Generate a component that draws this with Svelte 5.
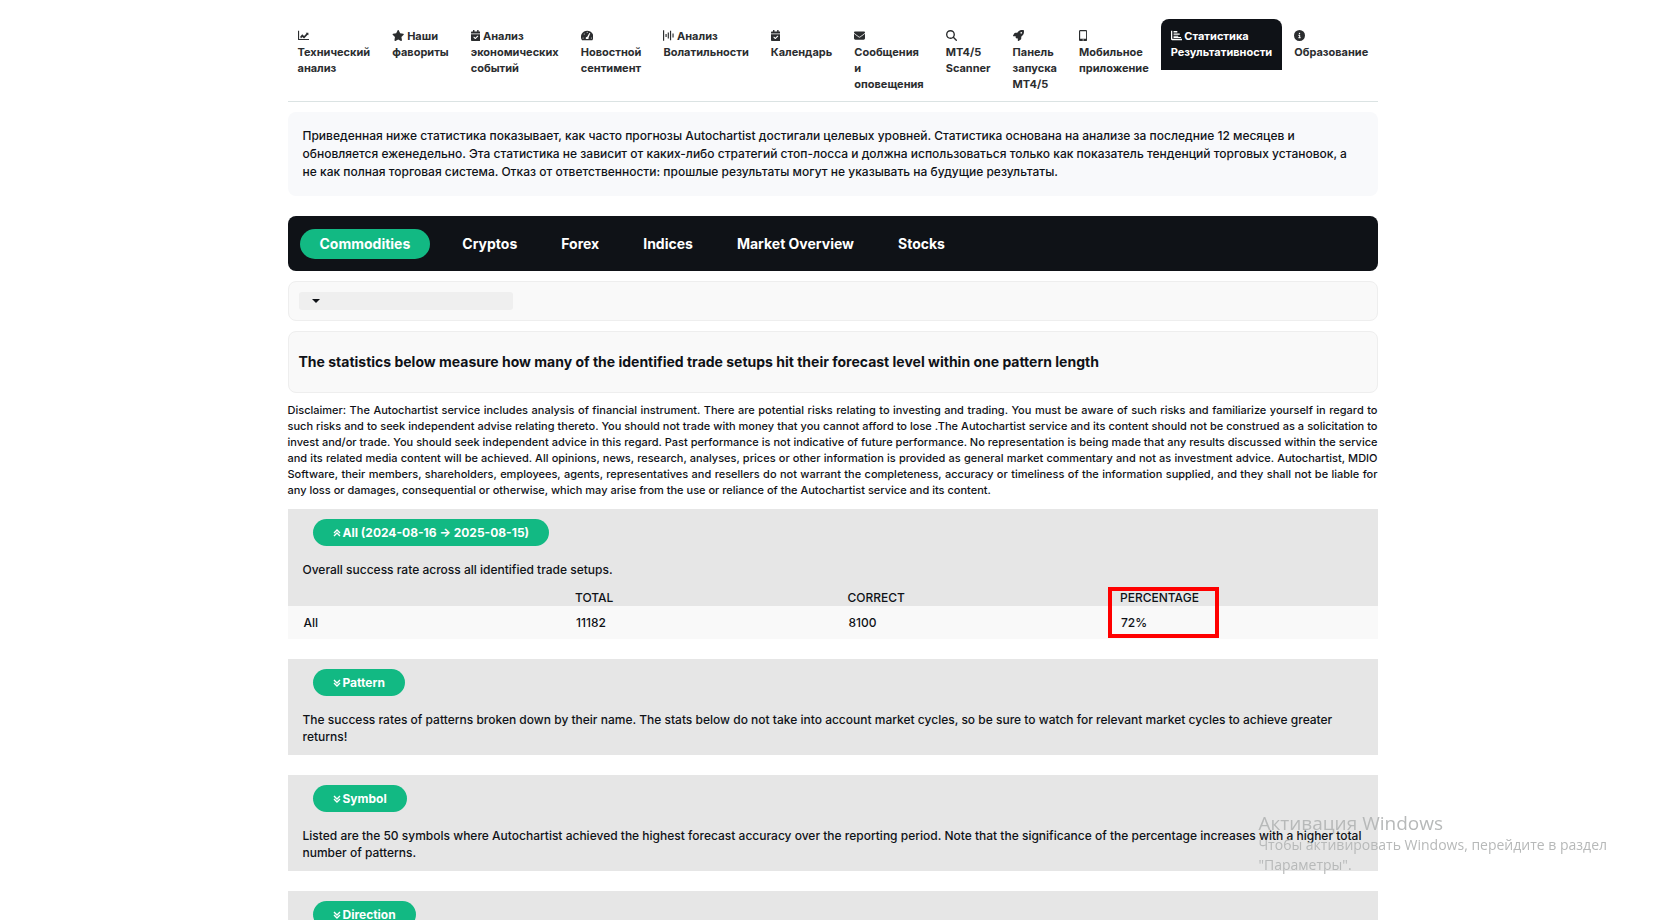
<script lang="ts">
  type Tab = {
    icon: string;
    lines: string[];
    inline?: boolean;
    active?: boolean;
  };

  type Section = {
    title: string;
    text?: string;
    open?: boolean;
  };

  const tabs: Tab[] = [
    { icon: 'line', lines: ['Технический', 'анализ'] },
    { icon: 'star', lines: ['Наши', 'фавориты'], inline: true },
    { icon: 'calendar', lines: ['Анализ', 'экономических', 'событий'], inline: true },
    { icon: 'gauge', lines: ['Новостной', 'сентимент'] },
    { icon: 'volatility', lines: ['Анализ', 'Волатильности'], inline: true },
    { icon: 'calendar', lines: ['Календарь'] },
    { icon: 'envelope', lines: ['Сообщения', 'и', 'оповещения'] },
    { icon: 'search', lines: ['MT4/5', 'Scanner'] },
    { icon: 'rocket', lines: ['Панель', 'запуска', 'MT4/5'] },
    { icon: 'mobile', lines: ['Мобильное', 'приложение'] },
    { icon: 'bars', lines: ['Статистика', 'Результативности'], inline: true, active: true },
    { icon: 'info', lines: ['Образование'] }
  ];

  const groups = ['Commodities', 'Cryptos', 'Forex', 'Indices', 'Market Overview', 'Stocks'];
  const columns = ['', 'TOTAL', 'CORRECT', 'PERCENTAGE'];
  const rows = [['All', '11182', '8100', '72%']];

  let activeGroup = $state('Commodities');
  let sections = $state<Section[]>([
    {
      title: 'All (2024-08-16 → 2025-08-15)',
      text: 'Overall success rate across all identified trade setups.',
      open: true
    },
    {
      title: 'Pattern',
      text: 'The success rates of patterns broken down by their name. The stats below do not take into account market cycles, so be sure to watch for relevant market cycles to achieve greater returns!'
    },
    {
      title: 'Symbol',
      text: 'Listed are the 50 symbols where Autochartist achieved the highest forecast accuracy over the reporting period. Note that the significance of the percentage increases with a higher total number of patterns.'
    },
    { title: 'Direction' }
  ]);

  // width of each icon's viewBox, height is always 512
  const iconWidths: Record<string, number> = {
    star: 576,
    calendar: 448,
    gauge: 576,
    mobile: 384
  };
</script>

{#snippet icon(name: string)}
  <svg class="icon" viewBox="0 0 {iconWidths[name] ?? 512} 512" aria-hidden="true">
    {#if name === 'line'}
      <path d="M0 32h52v384h460v52H28c-15 0-28-13-28-28Z" />
      <path d="m100 318 98-116 84 78 112-120-34-34h124v124l-34-34-168 184-84-80-60 74Z" />
    {:else if name === 'star'}
      <path
        d="M316.9 18C311.6 7 300.4 0 288.1 0s-23.4 7-28.8 18L195 150.3 51.4 171.5c-12 1.8-22 10.2-25.7 21.7s-.7 24.2 7.9 32.7L137.8 329 113.2 474.7c-2 12 3 24.2 12.9 31.3s23 8 33.8 2.3l128.3-68.5 128.3 68.5c10.8 5.7 23.9 4.9 33.8-2.3s14.9-19.3 12.9-31.3L438.5 329 542.7 225.9c8.6-8.5 11.7-21.2 7.9-32.7s-13.7-19.9-25.7-21.7L381.2 150.3 316.9 18z"
      />
    {:else if name === 'calendar'}
      <path d="M96 0h64v64h128V0h64v64h48c26 0 48 22 48 48v48H0v-48c0-26 22-48 48-48h48Z" />
      <path
        d="M0 192h448v272c0 26.5-21.5 48-48 48H48c-26.5 0-48-21.5-48-48V192zM329 305c9.4-9.4 9.4-24.6 0-33.9s-24.6-9.4-33.9 0l-95 95-47-47c-9.4-9.4-24.6-9.4-33.9 0s-9.4 24.6 0 33.9l64 64c9.4 9.4 24.6 9.4 33.9 0L329 305z"
      />
    {:else if name === 'gauge'}
      <path
        fill-rule="evenodd"
        d="M288 32a288 288 0 0 0-246 438c6 6 14 10 24 10h444c10 0 18-4 24-10A288 288 0 0 0 288 32ZM288 82a24 24 0 1 1 0 48 24 24 0 0 1 0-48ZM96 348a24 24 0 1 1 0 48 24 24 0 0 1 0-48ZM150 166a24 24 0 1 1 0 48 24 24 0 0 1 0-48ZM480 348a24 24 0 1 1 0 48 24 24 0 0 1 0-48ZM388 138l44 16-80 196c10 24 4 48-10 68H234c-34-44-6-106 56-108Z"
      />
    {:else if name === 'volatility'}
      <path
        d="M0 16h54v480H0ZM116 184h54v144h-54ZM220 120h54v272h-54ZM324 32h54v448h-54ZM440 160h54v192h-54Z"
      />
    {:else if name === 'envelope'}
      <path
        d="M48 64C21.5 64 0 85.5 0 112c0 15.1 7.1 29.3 19.2 38.4l217.6 163.2c11.4 8.5 27 8.5 38.4 0L492.8 150.4c12.1-9.1 19.2-23.3 19.2-38.4c0-26.5-21.5-48-48-48H48zM0 176v208c0 35.3 28.7 64 64 64h384c35.3 0 64-28.7 64-64V176L294.4 339.2c-22.8 17.1-54 17.1-76.8 0L0 176z"
      />
    {:else if name === 'search'}
      <path
        d="M416 208c0 45.9-14.9 88.3-40 122.7l126.6 126.7c12.5 12.5 12.5 32.8 0 45.3s-32.8 12.5-45.3 0L330.7 376c-34.4 25.2-76.8 40-122.7 40C93.1 416 0 322.9 0 208S93.1 0 208 0s208 93.1 208 208zM208 352a144 144 0 1 0 0-288 144 144 0 1 0 0 288z"
      />
    {:else if name === 'rocket'}
      <path
        d="M156.6 384.9L125.7 354c-8.5-8.5-11.5-20.8-7.7-32.2c3-8.9 7-20.5 11.8-33.8H24c-8.6 0-16.6-4.6-20.9-12.1s-4.2-16.7.2-24.1l52.5-88.5c13-21.9 36.5-35.3 61.9-35.3H200c2.4-4 4.8-7.7 7.2-11.3C289.1-4.1 411.1-8.1 483.9 5.3c11.6 2.1 20.6 11.2 22.8 22.8c13.4 72.9 9.3 194.8-111.4 276.7c-3.5 2.4-7.3 4.8-11.3 7.2v82.3c0 25.4-13.4 49-35.3 61.9l-88.5 52.5c-7.4 4.4-16.6 4.5-24.1.2s-12.1-12.2-12.1-20.9V380.8c-14.1 4.9-26.4 8.9-35.7 11.9c-11.2 3.6-23.4.5-31.8-7.8zM384 168a40 40 0 1 0 0-80 40 40 0 1 0 0 80z"
      />
    {:else if name === 'mobile'}
      <path
        fill-rule="evenodd"
        d="M64 0h256c35 0 64 29 64 64v384c0 35-29 64-64 64H64c-35 0-64-29-64-64V64C0 29 29 0 64 0ZM54 54v354h276V54ZM192 436a26 26 0 1 0 0 52 26 26 0 0 0 0-52Z"
      />
    {:else if name === 'bars'}
      <path d="M0 32h60v378h452v64H52c-28 0-52-22-52-50Z" />
      <path d="M118 50h176v64H118ZM118 160h288v60H118ZM118 264h220v50H118ZM118 330h350v40H118Z" />
    {:else if name === 'info'}
      <path
        d="M256 512A256 256 0 1 0 256 0a256 256 0 1 0 0 512zM216 336h24v-64h-24c-13.3 0-24-10.7-24-24s10.7-24 24-24h48c13.3 0 24 10.7 24 24v88h8c13.3 0 24 10.7 24 24s-10.7 24-24 24h-80c-13.3 0-24-10.7-24-24s10.7-24 24-24zm40-208a32 32 0 1 1 0 64 32 32 0 1 1 0-64z"
      />
    {/if}
  </svg>
{/snippet}

<main class="page">
  <nav class="tabs">
    {#each tabs as tab}
      <a href="#{tab.icon}" class:active={tab.active}>
        {@render icon(tab.icon)}
        {#if !tab.inline}<br />{/if}
        {#each tab.lines as line, i}
          {#if i > 0}<br />{/if}{line}
        {/each}
      </a>
    {/each}
  </nav>

  <p class="intro">
    Приведенная ниже статистика показывает, как часто прогнозы Autochartist достигали целевых уровней.
    Статистика основана на анализе за последние 12 месяцев и обновляется еженедельно. Эта статистика
    не зависит от каких-либо стратегий стоп-лосса и должна использоваться только как показатель
    тенденций торговых установок, а не как полная торговая система. Отказ от ответственности: прошлые
    результаты могут не указывать на будущие результаты.
  </p>

  <div class="groups">
    {#each groups as group}
      <button
        type="button"
        class:active={group === activeGroup}
        aria-pressed={group === activeGroup}
        onclick={() => (activeGroup = group)}
      >
        {group}
      </button>
    {/each}
  </div>

  <div class="panel">
    <label class="picker">
      <select></select>
    </label>
  </div>

  <div class="panel heading">
    <h1>
      The statistics below measure how many of the identified trade setups hit their forecast level
      within one pattern length
    </h1>
  </div>

  <p class="disclaimer">
    Disclaimer: The Autochartist service includes analysis of financial instrument. There are
    potential risks relating to investing and trading. You must be aware of such risks and familiarize
    yourself in regard to such risks and to seek independent advise relating thereto. You should not
    trade with money that you cannot afford to lose .The Autochartist service and its content should
    not be construed as a solicitation to invest and/or trade. You should seek independent advice in
    this regard. Past performance is not indicative of future performance. No representation is being
    made that any results discussed within the service and its related media content will be achieved.
    All opinions, news, research, analyses, prices or other information is provided as general market
    commentary and not as investment advice. Autochartist, MDIO Software, their members,
    shareholders, employees, agents, representatives and resellers do not warrant the completeness,
    accuracy or timeliness of the information supplied, and they shall not be liable for any loss or
    damages, consequential or otherwise, which may arise from the use or reliance of the Autochartist
    service and its content.
  </p>

  {#each sections as section}
    <section>
      <div class="summary">
        <button
          type="button"
          class="toggle"
          aria-expanded={section.open ?? false}
          onclick={() => (section.open = !section.open)}
        >
          <svg class="chevron" class:flipped={section.open} viewBox="0 0 8 8" aria-hidden="true">
            <path d="m1 1 3 3 3-3M1 4l3 3 3-3" />
          </svg>
          {section.title}
        </button>
        {#if section.text}
          <p>{section.text}</p>
        {/if}
      </div>
      {#if section.open}
        <table>
          <thead>
            <tr>
              {#each columns as column}
                <th>
                  {column}
                  {#if column === 'PERCENTAGE'}<span class="marker"></span>{/if}
                </th>
              {/each}
            </tr>
          </thead>
          <tbody>
            {#each rows as row}
              <tr>
                {#each row as cell}
                  <td>{cell}</td>
                {/each}
              </tr>
            {/each}
          </tbody>
        </table>
      {/if}
    </section>
  {/each}
</main>

<aside class="activation">
  <strong>Активация Windows</strong>
  <span>Чтобы активировать Windows, перейдите в раздел<br />"Параметры".</span>
</aside>

<style>
  :global(body) {
    margin: 0;
    background: #fff;
    color: #0f1217;
    font: 500 12px/17px Inter, 'Liberation Sans', sans-serif;
  }

  p,
  h1 {
    margin: 0;
  }

  button {
    border: 0;
    color: #fff;
    font-family: inherit;
    cursor: pointer;
  }

  .page {
    max-width: 1090px;
    margin: 0 auto;
    padding: 19px 0 0 4px;
  }

  .tabs {
    display: flex;
    align-items: flex-start;
    gap: 2px;
    border-bottom: 1px solid #dbe3e3;
  }

  .tabs a {
    padding: 9px 10px;
    border-radius: 8px 8px 0 0;
    color: #2b2d2f;
    font-size: 11px;
    font-weight: 700;
    line-height: 16px;
    text-decoration: none;
    white-space: nowrap;
  }

  .tabs a.active {
    padding-bottom: 10px;
    background: #0f1217;
    color: #fff;
  }

  .icon {
    height: 11px;
    fill: currentColor;
    vertical-align: -1px;
  }

  .intro {
    margin-top: 10px;
    padding: 15px;
    border-radius: 8px;
    background: #f8f9fb;
    line-height: 18px;
  }

  .groups {
    display: flex;
    gap: 4px;
    margin-top: 20px;
    padding: 13px 12px 12px;
    border-radius: 8px;
    background: #0f1217;
  }

  .groups button {
    padding: 6px 20px;
    border-radius: 15px;
    background: none;
    font-size: 14px;
    font-weight: 700;
    line-height: 18px;
  }

  .groups .active {
    margin-right: 8px;
    background: #12b983;
  }

  .panel {
    margin-top: 10px;
    padding: 10px;
    border: 1px solid #eee;
    border-radius: 8px;
    background: #f9f9f9;
  }

  .picker {
    position: relative;
    display: block;
    width: 214px;
  }

  .picker::after {
    content: '';
    position: absolute;
    top: 7px;
    left: 13px;
    border: 4px solid transparent;
    border-top-color: #0f1217;
    border-bottom: 0;
    pointer-events: none;
  }

  .picker select {
    display: block;
    width: 100%;
    height: 18px;
    border: 0;
    border-radius: 3px;
    background: #efefef;
    appearance: none;
  }

  .heading {
    padding: 21px 10px;
  }

  h1 {
    font-size: 14px;
    font-weight: 700;
    line-height: 18px;
  }

  .disclaimer {
    margin: 9px 0 11px;
    font-size: 11px;
    line-height: 16px;
    text-align: justify;
  }

  section {
    margin-bottom: 20px;
  }

  .summary {
    padding: 10px 15px;
    background: #e6e6e6;
  }

  .toggle {
    display: flex;
    align-items: center;
    gap: 2px;
    margin: 0 10px 15px;
    padding: 5px 20px;
    border-radius: 14px;
    background: #12b983;
    font-size: 12px;
    font-weight: 700;
    line-height: 17px;
  }

  .chevron {
    width: 8px;
    height: 8px;
    fill: none;
    stroke: #fff;
    stroke-width: 1.4;
  }

  .chevron.flipped {
    transform: rotate(180deg);
  }

  table {
    width: 100%;
    border-collapse: collapse;
    table-layout: fixed;
    background: #f9f9f9;
  }

  th {
    position: relative;
    height: 18px;
    padding: 0 15px;
    background: #e6e6e6;
    font-weight: 500;
    text-align: left;
  }

  td {
    padding: 8px 16px;
  }

  .marker {
    position: absolute;
    top: -1px;
    left: 3px;
    width: 103px;
    height: 43px;
    border: 4px solid #f00;
  }

  .activation {
    position: fixed;
    right: 54px;
    bottom: 45px;
    color: #b7b9b9;
    font: 14px/20px 'Open Sans', 'Noto Sans', sans-serif;
    pointer-events: none;
  }

  .activation strong {
    display: block;
    font-size: 19px;
    font-weight: 400;
    line-height: 24px;
  }
</style>
